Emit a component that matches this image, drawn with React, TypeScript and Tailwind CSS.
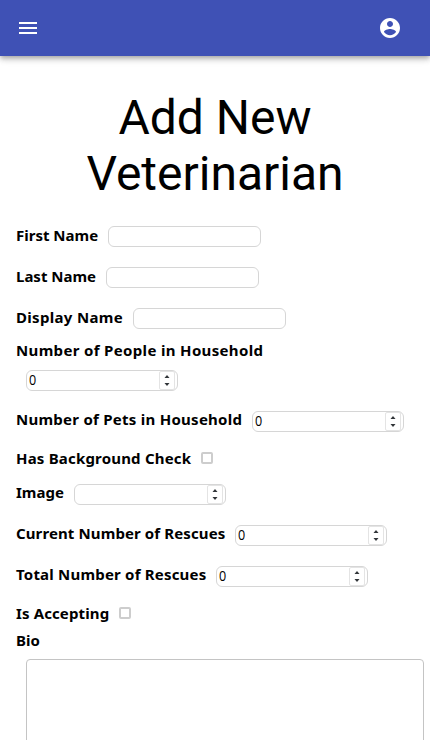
import React from "react";

type RowProps = {
  label: string;
  row: string;
  text: string;
  children?: React.ReactNode;
};

function Row({ label, row, text, children }: RowProps) {
  return (
    <div className={`flex items-start ${row}`}>
      <label
        className={`shrink-0 whitespace-nowrap font-['Noto_Sans','Open_Sans',sans-serif] text-[15px] leading-5 font-bold text-black ${text}`}
      >
        {label}
      </label>
      {children}
    </div>
  );
}

const box =
  "h-[21px] shrink-0 rounded-[6px] border border-[#d6d6d6] bg-white";

function TextBox() {
  return <input type="text" className={`${box} mt-px w-[153px] px-0.5 outline-none`} />;
}

function NumberBox({ value = "" }: { value?: string }) {
  return (
    <div className={`${box} flex w-[152px] items-stretch justify-between pr-[2px] pl-[2px]`}>
      <span className="inline-block origin-left scale-x-90 font-['Open_Sans',sans-serif] text-[14px] leading-[17px] text-black">
        {value}
      </span>
      <div className="flex w-4 flex-col items-center justify-between rounded-[2px] border border-[#e4e4e4] py-[3px]">
        <svg width="6" height="3" viewBox="0 0 6 3">
          <path d="M0.5 3 3 0 5.500 3Z" fill="#303438" />
        </svg>
        <svg width="6" height="3" viewBox="0 0 6 3">
          <path d="M0.5 0 3 3 5.500 0Z" fill="#303438" />
        </svg>
      </div>
    </div>
  );
}

function CheckBox() {
  return (
    <div className="h-3 w-3 shrink-0 rounded-[2px] border-2 border-[#cdcdcd] bg-white" />
  );
}

export default function App() {
  return (
    <div className="h-[740px] w-full overflow-hidden bg-white">
      <header className="flex h-14 items-center justify-between bg-[#3f51b5] pr-7 pl-4 shadow-[0_2px_4px_-1px_rgba(0,0,0,0.2),0_4px_5px_0_rgba(0,0,0,0.14),0_1px_10px_0_rgba(0,0,0,0.12)]">
        <svg width="24" height="24" viewBox="0 0 24 24" fill="#fff">
          <path d="M3 18h18v-2H3v2zm0-5h18v-2H3v2zm0-7v2h18V6H3z" />
        </svg>
        <svg width="24" height="24" viewBox="0 0 24 24" fill="#fff">
          <path d="M12 2C6.48 2 2 6.48 2 12s4.48 10 10 10 10-4.480 10-10S17.520 2 12 2zm0 3c1.660 0 3 1.340 3 3s-1.340 3-3 3-3-1.340-3-3 1.340-3 3-3zm0 14.200c-2.500 0-4.710-1.280-6-3.220.03-1.990 4-3.080 6-3.080 1.990 0 5.970 1.090 6 3.080-1.290 1.940-3.500 3.220-6 3.220z" />
        </svg>
      </header>
      <main className="px-4 pt-[34px]">
        <h1 className="mx-auto h-[135px] w-[300px] text-center font-[Roboto,sans-serif] text-[48px] leading-[56px] font-normal text-black">
          Add New Veterinarian
        </h1>
        <form>
          <Row label="First Name" row="h-[41px]" text="w-[92px]">
            <TextBox />
          </Row>
          <Row label="Last Name" row="h-[41px]" text="w-[90px]">
            <TextBox />
          </Row>
          <Row label="Display Name" row="h-[37px]" text="w-[117px] tracking-[0.32px]">
            <TextBox />
          </Row>
          <Row label="Number of People in Household" row="h-[26px]" text="-mt-1 tracking-[0.34px]" />
          <div className="h-[41px] pl-2.5">
            <NumberBox value="0" />
          </div>
          <Row label="Number of Pets in Household" row="h-[41px]" text="-mt-0.5 w-[236px] tracking-[0.26px]">
            <NumberBox value="0" />
          </Row>
          <Row label="Has Background Check" row="h-8" text="-mt-1 w-[185px] tracking-[0.19px]">
            <CheckBox />
          </Row>
          <Row label="Image" row="h-[41px]" text="-mt-0.5 w-[58px]">
            <NumberBox />
          </Row>
          <Row label="Current Number of Rescues" row="h-[41px]" text="-mt-0.5 w-[219px] tracking-[0.11px]">
            <NumberBox value="0" />
          </Row>
          <Row label="Total Number of Rescues" row="h-[41px]" text="-mt-0.5 w-[200px] tracking-[0.2px]">
            <NumberBox value="0" />
          </Row>
          <Row label="Is Accepting" row="h-[27px]" text="-mt-1 w-[103px] tracking-[0.12px]">
            <CheckBox />
          </Row>
          <Row label="Bio" row="h-[25px]" text="-mt-1" />
          <textarea className="ml-2.5 block h-[140px] w-[398px] resize-none rounded-[4px] border border-[#c4c4c4] bg-white outline-none" />
        </form>
      </main>
    </div>
  );
}
